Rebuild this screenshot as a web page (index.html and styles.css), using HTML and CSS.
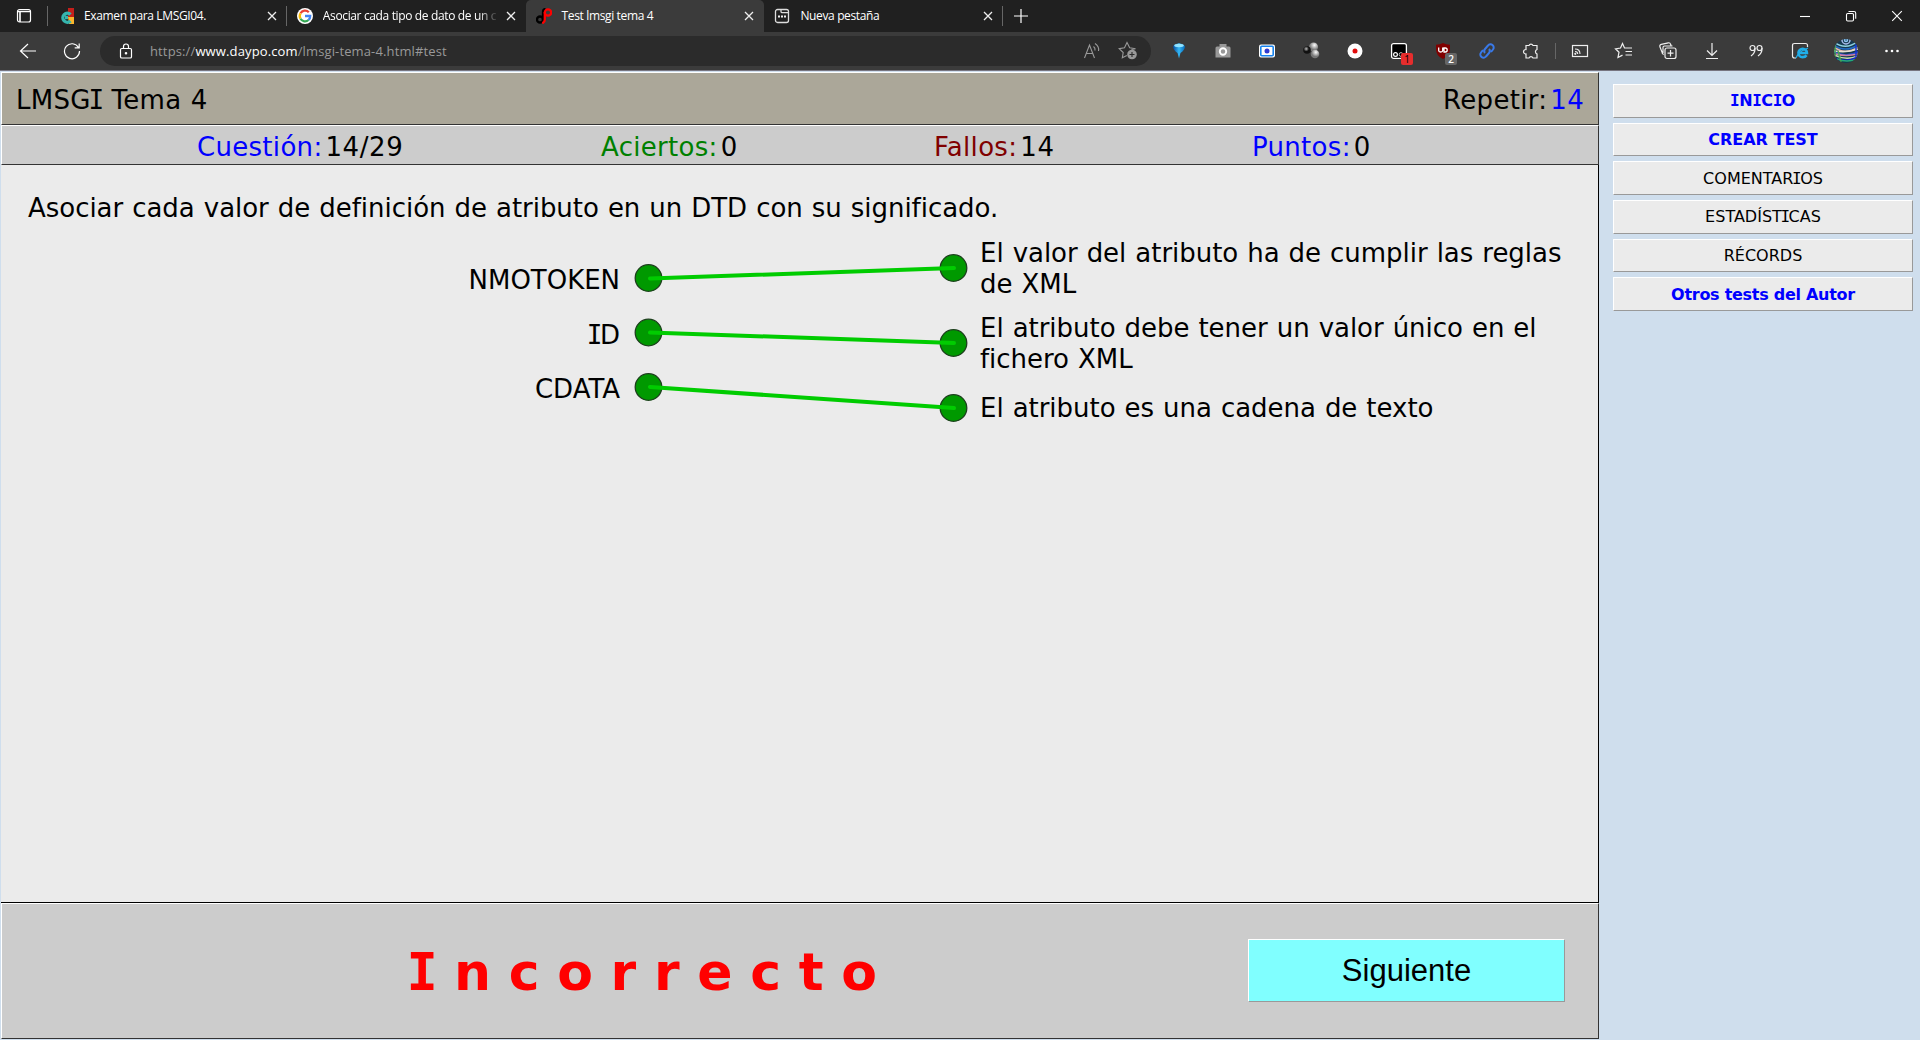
FILE: index.html
```html
<!DOCTYPE html>
<html lang="es">
<head>
<meta charset="utf-8">
<title>Test lmsgi tema 4</title>
<link rel="stylesheet" href="styles.css">
</head>
<body>
<header class="browser">
  <div class="tabs">
    <div class="workspace"><svg width="16" height="16" viewBox="0 0 16 16"><rect x="1.5" y="1.5" width="13" height="12.5" rx="2" fill="none" stroke="#fff" stroke-width="1.2"/><path d="M1.5 3.5h13M4 3v11" stroke="#fff" stroke-width="1.6"/></svg></div>
    <div class="tab line">
      <svg width="16" height="16" viewBox="0 0 16 16"><path d="M10 0h6v9h-6z" fill="#c41f1b"/><path d="M10 9h6v7h-5z" fill="#fcb52b"/><path d="M12.500 6.500A4.500 4.500 0 1 0 12.500 13M10 9.500H7" fill="none" stroke="#35b5ae" stroke-width="3.400"/></svg>
      <span class="name">Examen para LMSGI04.</span><svg class="close" viewBox="0 0 10 10"><path d="M1 1l8 8M9 1L1 9"/></svg>
    </div>
    <div class="tab">
      <svg width="16" height="16" viewBox="0 0 16 16"><circle cx="8" cy="8" r="8" fill="#fff"/><g fill="none" stroke-width="2.300"><path d="M11.800 4.200A5.200 5.200 0 0 0 3.500 5.300" stroke="#ea4335"/><path d="M3.500 5.300a5.300 5.300 0 0 0 0 5.400" stroke="#fbbc05"/><path d="M3.500 10.700a5.200 5.200 0 0 0 8 1.300" stroke="#34a853"/><path d="M11.500 12A5.200 5.200 0 0 0 13.200 8H8" stroke="#4285f4"/></g></svg>
      <span class="name fade">Asociar cada tipo de dato de un c</span><svg class="close" viewBox="0 0 10 10"><path d="M1 1l8 8M9 1L1 9"/></svg>
    </div>
    <div class="tab active">
      <svg width="16" height="16" viewBox="0 0 16 16"><g fill="none" stroke-width="2.300"><circle cx="4" cy="11.500" r="3" stroke="#000"/><path d="M7 12V4Q7 1.200 9.500 1" stroke="#000"/><circle cx="12" cy="4.500" r="3.200" stroke="#f00"/><path d="M8.800 4v7.500q0 3-2.600 3.700" stroke="#f00"/></g></svg>
      <span class="name">Test lmsgi tema 4</span><svg class="close" viewBox="0 0 10 10"><path d="M1 1l8 8M9 1L1 9"/></svg>
    </div>
    <div class="tab line">
      <svg width="16" height="16" viewBox="0 0 16 16"><path d="M3.500 1.500h9a2 2 0 0 1 2 2v9a2 2 0 0 1-2 2h-9a2 2 0 0 1-2-2v-9a2 2 0 0 1 2-2zM7 1.500v2q0 1.200 1.200 1.200h6" fill="none" stroke="#ddd" stroke-width="1.300"/><path d="M4 8.500h2M7 8.500h2M10 8.500h2" stroke="#eee" stroke-width="1.800"/></svg>
      <span class="name">Nueva pestaña</span><svg class="close" viewBox="0 0 10 10"><path d="M1 1l8 8M9 1L1 9"/></svg>
    </div>
    <svg class="plus" width="14" height="14" viewBox="0 0 14 14"><path d="M7 0v14M0 7h14" stroke="#fff" stroke-width="1.200"/></svg>
    <div class="window">
      <svg viewBox="0 0 46 32"><path d="M18 16.500h10"/></svg>
      <svg viewBox="0 0 46 32"><rect x="18.500" y="13.500" width="7" height="7.500" rx="1.200"/><path d="M20.500 11.500h5.500q1.700 0 1.700 1.700v5.500"/></svg>
      <svg viewBox="0 0 46 32"><path d="M18.200 11.200l9.600 9.600M27.800 11.200l-9.600 9.600"/></svg>
    </div>
  </div>
  <div class="toolbar">
    <svg class="nav back" viewBox="0 0 18 18"><path d="M17 9H2M9 2L1.500 9L9 16"/></svg>
    <svg class="nav reload" viewBox="0 0 18 18"><path d="M15.500 5.500A7.500 7.500 0 1 0 16.500 9M16.200 1.500v4.300h-4.500"/></svg>
    <div class="address">
      <svg class="nav lock" viewBox="0 0 18 18"><rect x="3.500" y="6.500" width="11" height="9.500" rx="1.300"/><path d="M6.500 6.500V4.500a2.500 2.500 0 0 1 5 0v2"/><circle cx="9" cy="11.300" r=".7"/></svg>
      <span class="url">https://<b>www.daypo.com</b>/lmsgi-tema-4.html#test</span>
      <svg class="read" viewBox="0 0 18 18"><path d="M1.500 16L6.500 3l5 13M3.200 11.500h6.700M10.500 4.500q2 1.500 1.500 4M12 1.500q4.500 3 3.500 7.500"/></svg>
      <svg class="star" viewBox="0 0 20 20"><path d="M13.500 8.500l4-.8-5.800-1L9 1.500 6.500 6.700l-5.300.9 4 3.900-.9 5.300 4.500-2.300"/><circle cx="14" cy="13.500" r="4.800" fill="#999" stroke="none"/><path d="M11.500 13.500h5M14 11v5" stroke="#2b2b2b"/></svg>
    </div>
    <div class="tools">
      <span><svg viewBox="0 0 20 20"><defs><linearGradient id="gem"><stop offset="0" stop-color="#064a9b"/><stop offset=".5" stop-color="#35b8f5"/><stop offset="1" stop-color="#0668b8"/></linearGradient></defs><path d="M4 5q6-5.500 12 0 0 4-4.500 7L10 17.500 8.500 12Q4 9 4 5z" fill="url(#gem)"/><ellipse cx="10" cy="4.500" rx="4.800" ry="1.700" fill="#91e3ff"/></svg></span>
      <span><svg viewBox="0 0 20 20"><path d="M4 5.500h2.500V3h7v2.500H16q1.500 0 1.500 1.500v9.500h-15V7q0-1.500 1.500-1.500z" fill="#999"/><circle cx="10" cy="10.500" r="3.200" fill="#999" stroke="#fff" stroke-width="1.900"/></svg></span>
      <span><svg viewBox="0 0 20 20"><rect x="2" y="3.500" width="16" height="13" rx="2" fill="#fff"/><rect x="3.800" y="5.300" width="12.400" height="9.400" rx="1" fill="#fff" stroke="#1682ed" stroke-width="1.600"/><circle cx="10" cy="10" r="2.500" fill="#3039cf"/></svg></span>
      <span><svg viewBox="0 0 20 20"><defs><radialGradient id="ball" cx=".6" cy=".3"><stop offset="0" stop-color="#fff"/><stop offset="1" stop-color="#777"/></radialGradient><radialGradient id="dark" cx=".4" cy=".35"><stop offset="0" stop-color="#bbb"/><stop offset=".7" stop-color="#111"/></radialGradient></defs><circle cx="12.500" cy="6" r="4.600" fill="url(#ball)"/><circle cx="14" cy="13" r="4.300" fill="url(#ball)"/><circle cx="6" cy="9" r="3.800" fill="url(#dark)"/></svg></span>
      <span><svg viewBox="0 0 20 20"><circle cx="10" cy="10" r="7.500" fill="#fff"/><circle cx="10" cy="10" r="2.500" fill="#e20d0d"/></svg></span>
      <span><svg viewBox="0 0 20 20"><rect x="2.600" y="2.600" width="14.800" height="14.800" rx="2" fill="#000" stroke="#fff" stroke-width="1.300"/><circle cx="6.500" cy="13.500" r="1.900" fill="none" stroke="#fff" stroke-width="1.200"/><circle cx="12" cy="13.500" r="1.900" fill="none" stroke="#bbb"/></svg><em class="badge red">1</em></span>
      <span><svg viewBox="0 0 20 20"><path d="M10 2q3 1.700 7 1.700V8q0 7-7 10Q3 15 3 8V3.700Q7 3.700 10 2z" fill="#800000"/><path d="M5.700 6.500v3q0 1.500 2 1.500t2-1.500v-3M11 7v4h1.200q2 0 2-2t-2-2z" fill="none" stroke="#fff" stroke-width="1.300"/></svg><em class="badge grey">2</em></span>
      <span><svg viewBox="0 0 20 20"><g fill="none" stroke="#3979e8" stroke-width="2"><path d="M8 12a3 3 0 0 1 0-4l3-3.500a3 3 0 0 1 5 4L14 11"/><path d="M12 8a3 3 0 0 1 0 4l-3 3.500a3 3 0 0 1-5-4L6 9"/></g></svg></span>
      <span><svg class="lineicon" viewBox="0 0 20 20"><path d="M5 4.500h3a2.200 2.200 0 0 1 4 0h4v4a2.400 2.400 0 0 0 0 4.500v4h-4a2.200 2.200 0 0 0-4 0H5v-4a2.400 2.400 0 0 1-2.500-2.300A2.400 2.400 0 0 1 5 8.500z"/></svg></span>
      <i class="divider"></i>
      <span><svg class="lineicon" viewBox="0 0 20 20"><rect x="2.500" y="4.500" width="15" height="11"/><path d="M5 8q5 0 5 5M5 10.500q2.700 0 2.700 2.500" stroke-width="1.100"/><circle cx="5.300" cy="12.800" r=".5"/></svg></span>
      <span><svg class="lineicon" viewBox="0 0 20 20"><path d="M13 7h-2.500L8.500 2.500 6.500 7l-5 .8L5 11.200l-1 5.300 4.500-2.400M11.500 7H18M11.500 10.500H18M11.500 14H18"/></svg></span>
      <span><svg class="lineicon" viewBox="0 0 20 20"><rect x="7" y="7" width="11" height="10.500" rx="2"/><path d="M12.500 9v6.500M9.500 12.200h6M5.800 13.500Q4 13 4 11L2 6Q1.300 4 3.300 3.300l7-1.500q1.800-.3 2.300 1.500l.5 1.500M5 12V6.500Q5 5 6.500 5h8"/></svg></span>
      <span><svg class="lineicon" viewBox="0 0 20 20"><path d="M10 2v12M5 9.500l5 5 5-5M4 17.500h12"/></svg></span>
      <span><svg class="lineicon" viewBox="0 0 20 20"><circle cx="6.500" cy="7" r="2.500"/><path d="M9 7q.3 5-4 8"/><circle cx="13.500" cy="7" r="2.500"/><path d="M16 7q.3 5-4 8"/></svg></span>
      <span><svg class="lineicon" viewBox="0 0 20 20"><path d="M6 17H4.500Q2.500 17 2.500 15V4.500q0-2 2-2h11q2 0 2 2V6"/><path d="M16.500 14.200q-1.200 2-4 2a4.200 4.200 0 1 1 4.400-4.200H8.500" stroke="#20aee9" stroke-width="2.700"/><path d="M6 17q2-6 12-10" stroke="#20aee9" stroke-width="1.100"/></svg></span>
      <span class="profile"><svg viewBox="0 0 24 24"><defs><clipPath id="face"><circle cx="12" cy="12" r="12"/></clipPath></defs><g clip-path="url(#face)" fill="none" stroke-width="1.500"><path d="M0 0h24v24H0z" fill="#173a4f"/><path d="M0 3q12 9 24-1" stroke="#8fd0e1"/><path d="M0 6q11 8 24 0" stroke="#236bc5"/><path d="M1 9q11 7 23-1" stroke="#dfb8ae"/><path d="M0 12q14 2 24-2" stroke="#e6e0d0"/><path d="M0 13q12 6 24 0" stroke="#2a50d8"/><path d="M2 15q10 3 22 0" stroke="#d080a0"/><path d="M0 16q12 6 24 1" stroke="#c6dfae"/><path d="M0 19q12 5 24-1" stroke="#1a1adb"/><path d="M3 20q10 4 20 0" stroke="#25a978"/><path d="M1 6v14M4 12l3 11" stroke="#49a451"/><path d="M22 5v13" stroke="#1330d0"/><circle cx="12" cy="1" r="4" stroke="#a9bdec"/><circle cx="12" cy="1" r="1.500" stroke="#8fc4f0"/></g></svg></span>
      <span><svg viewBox="0 0 20 20"><g fill="#fff"><circle cx="4.500" cy="10" r="1.300"/><circle cx="10" cy="10" r="1.300"/><circle cx="15.500" cy="10" r="1.300"/></g></svg></span>
    </div>
  </div>
</header>
<div class="page">
  <main class="test">
    <div class="title"><span>LMSG<span class="i">I</span> Tema 4</span><span class="repeat">Repetir:<span class="count">14</span></span></div>
    <div class="status">
      <div class="blue">Cuestión:<b>14/29</b></div><div class="green">Aciertos:<b>0</b></div><div class="maroon">Fallos:<b>14</b></div><div class="blue">Puntos:<b>0</b></div>
    </div>
    <section class="question">
      <p class="prompt">Asociar cada valor de definición de atributo en un DTD con su significado.</p>
      <div class="match">
        <div class="terms"><div>NMOTOKEN</div><div><span class="i">I</span>D</div><div>CDATA</div></div>
        <svg class="links" width="360" height="200" viewBox="620 236 360 200">
          <g fill="#009900" stroke="#1d3f1d" stroke-width="1.300"><circle cx="648.500" cy="278" r="13.300"/><circle cx="648.500" cy="332.500" r="13.300"/><circle cx="648.500" cy="387" r="13.300"/><circle cx="953.500" cy="268" r="13.300"/><circle cx="953.500" cy="343" r="13.300"/><circle cx="953.500" cy="408" r="13.300"/></g>
          <g stroke="#00cc00" stroke-width="4" stroke-linecap="round"><path d="M650 278.500L954 268M650 332.500L954 343M650 387L954 408"/></g>
        </svg>
        <div class="meanings"><div>El valor del atributo ha de cumplir las reglas<br>de XML</div><div>El atributo debe tener un valor único en el<br>fichero XML</div><div class="single">El atributo es una cadena de texto</div></div>
      </div>
    </section>
    <footer class="result"><strong class="verdict"><span class="i">I</span>ncorrecto</strong><button class="next">Siguiente</button></footer>
  </main>
  <nav class="side">
    <a class="strong"><span><span class="i">I</span>N<span class="i">I</span>C<span class="i">I</span>O</span></a><a class="strong">CREAR TEST</a><a><span>COMENTAR<span class="i">I</span>OS</span></a><a><span>ESTADÍST<span class="i">I</span>CAS</span></a><a>RÉCORDS</a><a class="strong author">Otros tests del Autor</a>
  </nav>
</div>
</body>
</html>
```
FILE: styles.css
```css
* { box-sizing: border-box; }
body { margin: 0; height: 1040px; overflow: hidden; display: flex; flex-direction: column; background: #cfdeed; color: #000; font: 26px/31px "DejaVu Sans", sans-serif; }
svg { display: block; flex: none; }

.browser { flex: none; font: 12px/16px "Open Sans", sans-serif; color: #fff; }
.tabs { height: 32px; display: flex; align-items: center; background: #202020; }
.workspace { width: 48px; height: 20px; padding: 2px 0 0 16px; border-right: 1px solid #666; }
.tab { position: relative; width: 238.8px; height: 32px; padding: 0 10px; display: flex; align-items: center; }
.tab.active { background: #3b3b3b; border-radius: 5px 5px 0 0; }
.tab.line::after { content: ""; position: absolute; right: 0; top: 6px; width: 1px; height: 20px; background: #666; }
.name { flex: 1; margin: 0 6px 0 10px; white-space: nowrap; letter-spacing: -.36px; }
.fade { -webkit-mask-image: linear-gradient(90deg, #000 88%, transparent 99%); mask-image: linear-gradient(90deg, #000 88%, transparent 99%); }
.close { width: 10px; height: 10px; fill: none; stroke: #eee; stroke-width: 1.3; }
.plus { margin-left: 11px; }
.window { display: flex; margin-left: auto; }
.window svg { width: 46px; height: 32px; fill: none; stroke: #fff; stroke-width: 1.1; }

.toolbar { height: 39px; padding-left: 19px; display: flex; align-items: center; background: #3b3b3b; border-bottom: 1px solid #777580; }
.nav { width: 18px; height: 18px; fill: none; stroke: #fff; stroke-width: 1.2; }
.reload { margin-left: 26px; }
.address { width: 1051px; height: 30px; margin-left: 19px; padding: 0 13px 0 17px; display: flex; align-items: center; background: #2b2b2b; border-radius: 15px; }
.url { margin-left: 15px; color: #999; font-size: 13px; letter-spacing: .13px; }
.url b { color: #fff; font-weight: 400; }
.read, .star { width: 18px; height: 18px; fill: none; stroke: #999; stroke-width: 1.1; }
.read { margin-left: auto; }
.star { width: 20px; height: 20px; margin-left: 17px; }
.tools { display: flex; align-items: center; margin-left: 6px; }
.tools span { position: relative; width: 44px; height: 38px; display: flex; align-items: center; justify-content: center; }
.tools span svg { width: 20px; height: 20px; }
.tools .profile { width: 48px; }
.tools .profile svg { width: 24px; height: 24px; }
.lineicon { fill: none; stroke: #eee; stroke-width: 1.2; }
.divider { width: 1px; height: 16px; margin: 0 2px; background: #666; }
.badge { position: absolute; left: 24px; top: 21px; width: 12px; height: 12px; border-radius: 2px; font: 10px/12px "Open Sans", sans-serif; text-align: center; }
.red { background: #e62d2d; color: #000; }
.grey { background: #666; color: #fff; font-weight: 600; }

.page { flex: 1; display: flex; padding: 1px 7px 1px 1px; }
.test { width: 1598px; display: flex; flex-direction: column; letter-spacing: -.03px; word-spacing: .8px; }
.i { font-family: "DejaVu Sans Mono", monospace; margin: 0 -.09em; }
.title { height: 53px; padding: 3px 14px 0; display: flex; justify-content: space-between; align-items: center; background: #aba799; border: 1px solid #333; border-top-color: #fff; border-left-color: #fff; letter-spacing: .3px; }
.count { margin-left: 3px; color: #00f; }
.status { height: 40px; padding: 5px 0 0 195px; display: grid; grid-template-columns: 404px 333px 318px 1fr; align-items: center; background: #ccc; border: 1px solid #333; border-top-color: #fff; border-left-color: #fff; letter-spacing: .3px; }
.status b { margin-left: 3px; font-weight: 400; color: #000; letter-spacing: .6px; }
.blue { color: #00f; }
.green { color: #008000; }
.maroon { color: #800000; }
.question { height: 738px; background: #ebebeb; border: 1px solid #000; border-width: 0 1px 1px 0; }
.prompt { margin: 0; padding: 28px 0 0 27px; }
.match { display: flex; margin-top: 12px; }
.terms { width: 619px; padding-top: 17px; text-align: right; }
.terms div { height: 54.5px; padding-top: 12px; }
.links { flex: none; }
.meanings { display: flex; flex-direction: column; gap: 13px; padding-top: 2px; white-space: nowrap; }
.single { padding-top: 5px; }
.result { height: 136px; padding: 0 33px 1px 406px; display: flex; justify-content: space-between; align-items: center; background: #ccc; border: 1px solid #333; border-top-color: #fff; border-left-color: #fff; }
.verdict { color: #f00; font-size: 52px; line-height: 62px; letter-spacing: 17.7px; padding-top: 3px; }
.verdict .i, .strong .i { margin: 0 -.03em; }
.next { width: 317px; height: 63px; padding: 0; background: #80ffff; color: #000; border: 1px solid #999; border-top-color: #fff; border-left-color: #fff; font: 31px "Liberation Sans", sans-serif; }
.side { width: 300px; margin-left: 14px; padding-top: 12px; display: flex; flex-direction: column; gap: 5px; font-size: 16px; line-height: 20px; }
.side a { height: 33.67px; padding-top: 1px; display: flex; align-items: center; justify-content: center; background: #ebebeb; border: 1px solid #999; border-top-color: #fff; border-left-color: #fff; }
.side .strong { color: #00f; font-weight: 700; }
.side .author { letter-spacing: -.28px; }
```
